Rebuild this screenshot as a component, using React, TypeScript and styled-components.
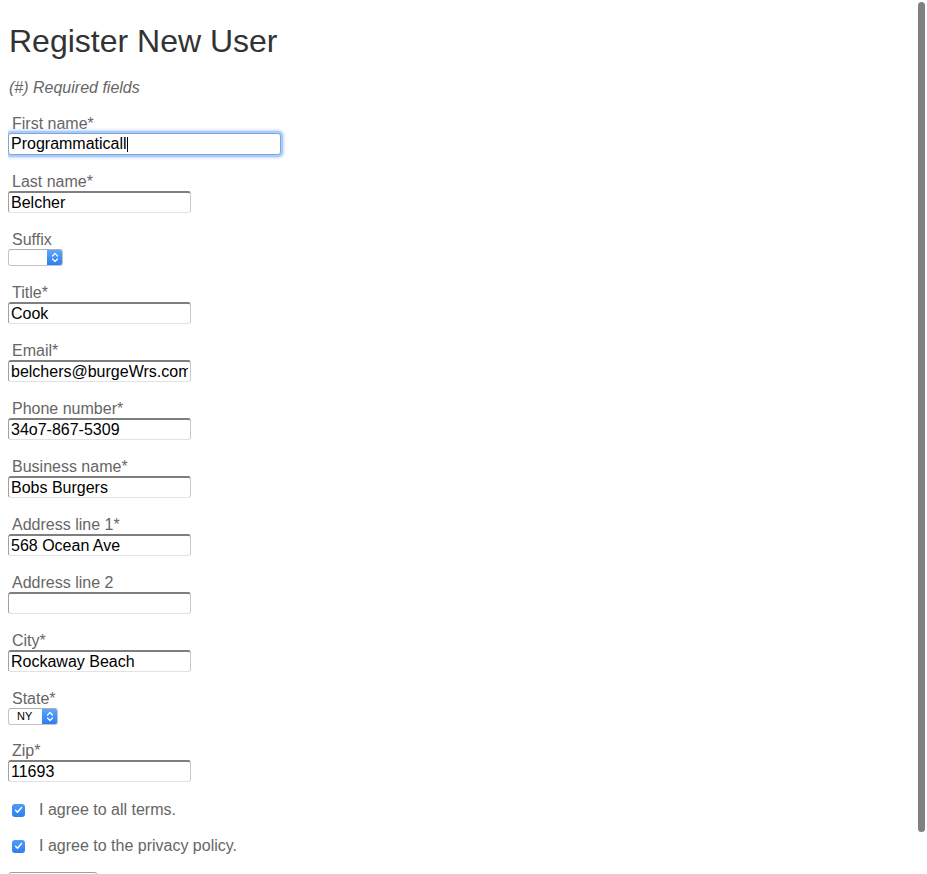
import React from 'react';
import styled, { createGlobalStyle } from 'styled-components';

const GlobalStyle = createGlobalStyle`
  html {
    scrollbar-width: none;
  }
  html::-webkit-scrollbar {
    display: none;
  }
  body {
    margin: 8px;
    background: #fff;
    font-family: 'Liberation Sans', Arial, Helvetica, sans-serif;
  }
`;

const FIELDS_A = [
  { label: 'Last name*', value: 'Belcher' },
];

const FIELDS_B = [
  { label: 'Title*', value: 'Cook' },
  { label: 'Email*', value: 'belchers@burgeWrs.com' },
  { label: 'Phone number*', value: '34o7-867-5309' },
  { label: 'Business name*', value: 'Bobs Burgers' },
  { label: 'Address line 1*', value: '568 Ocean Ave' },
  { label: 'Address line 2', value: '' },
  { label: 'City*', value: 'Rockaway Beach' },
];

export default function App() {
  return (
    <>
      <GlobalStyle />
      <Form onSubmit={(e) => e.preventDefault()}>
        <Title>Register New User</Title>
        <Note>(#) Required fields</Note>

        <Field>
          <Label>First name*</Label>
          <FocusWrap>
            <TextInput $focused $wide defaultValue="Programmaticall" />
            <Caret />
          </FocusWrap>
        </Field>

        {FIELDS_A.map((f) => (
          <Field key={f.label}>
            <Label>{f.label}</Label>
            <TextInput defaultValue={f.value} />
          </Field>
        ))}

        <Field>
          <Label>Suffix</Label>
          <Select width={55} value="" />
        </Field>

        {FIELDS_B.map((f) => (
          <Field key={f.label}>
            <Label>{f.label}</Label>
            <TextInput defaultValue={f.value} />
          </Field>
        ))}

        <Field>
          <Label>State*</Label>
          <Select width={50} value="NY" />
        </Field>

        <Field $tight>
          <Label>Zip*</Label>
          <TextInput defaultValue="11693" />
        </Field>

        <CheckRow>
          <CheckBox />
          <CheckText>I agree to all terms.</CheckText>
        </CheckRow>
        <CheckRow>
          <CheckBox />
          <CheckText>I agree to the privacy policy.</CheckText>
        </CheckRow>

        <SubmitButton type="submit">Register</SubmitButton>
      </Form>
      <ScrollThumb />
    </>
  );
}

function Select({ width, value }: { width: number; value: string }) {
  return (
    <SelectBox style={{ width }}>
      <SelectValue>{value}</SelectValue>
      <SelectCap>
        <svg width="8" height="11" viewBox="0 0 8 11" fill="none">
          <path d="M1.5 4L4 1.5L6.5 4" stroke="#fff" strokeWidth="1.2" strokeLinecap="round" strokeLinejoin="round" />
          <path d="M1.5 7L4 9.5L6.5 7" stroke="#fff" strokeWidth="1.2" strokeLinecap="round" strokeLinejoin="round" />
        </svg>
      </SelectCap>
    </SelectBox>
  );
}

function CheckBox() {
  return (
    <Check>
      <svg width="9" height="8" viewBox="0 0 9 8" fill="none">
        <path d="M1.5 4.2L3.5 6.2L7.5 1.5" stroke="#fff" strokeWidth="1.5" strokeLinecap="round" strokeLinejoin="round" />
      </svg>
    </Check>
  );
}

const Form = styled.form`
  display: flex;
  flex-direction: column;
  align-items: flex-start;
`;

const Title = styled.h1`
  margin: 16px 0 0 1px;
  font-size: 32px;
  line-height: 35px;
  font-weight: normal;
  color: #333;
`;

const Note = styled.p`
  margin: 19px 0 0 1px;
  font-size: 16px;
  line-height: 20px;
  font-style: italic;
  color: #666;
`;

const Field = styled.div<{ $tight?: boolean }>`
  display: flex;
  flex-direction: column;
  align-items: flex-start;
  margin-top: ${(p) => (p.$tight ? '17px' : '18px')};
  &:first-of-type {
    margin-top: 17px;
  }
`;

const Label = styled.label`
  padding-left: 4px;
  font-size: 16px;
  line-height: 18px;
  color: #666;
`;

const FocusWrap = styled.div`
  position: relative;
`;

const TextInput = styled.input<{ $focused?: boolean; $wide?: boolean }>`
  box-sizing: border-box;
  width: ${(p) => (p.$wide ? '273px' : '183px')};
  height: 22px;
  margin: 0;
  padding: 0 2px;
  font-family: 'Liberation Sans', Arial, sans-serif;
  font-size: 16px;
  color: #000;
  background: #fff;
  border: 1px solid #c8c8c8;
  border-top: 2px solid #7f7f7f;
  border-left-color: #a0a0a0;
  border-bottom-color: #e2e2e2;
  border-radius: 3px;
  outline: none;
  ${(p) =>
    p.$focused &&
    `
    border: 1px solid #7aa7e0;
    box-shadow: 0 0 0 2px #a9cbf5, 0 0 3px 3px rgba(120, 170, 240, 0.45);
  `}
`;

const Caret = styled.span`
  position: absolute;
  left: 119px;
  top: 4px;
  width: 1px;
  height: 15px;
  background: #000;
`;

const SelectBox = styled.div`
  box-sizing: border-box;
  display: flex;
  height: 17px;
  border: 1px solid #c4c4c4;
  border-top-color: #b0b0b0;
  border-radius: 3px;
  background: #fff;
  overflow: hidden;
`;

const SelectValue = styled.span`
  flex: 1;
  padding-left: 8px;
  font-size: 11px;
  line-height: 15px;
  color: #000;
`;

const SelectCap = styled.span`
  width: 15px;
  display: flex;
  align-items: center;
  justify-content: center;
  background: linear-gradient(#5ea6fb, #2c7ef3);
`;

const CheckRow = styled.label`
  display: flex;
  align-items: center;
  height: 20px;
  padding-left: 4px;
  margin-top: 18px;
  & + & {
    margin-top: 16px;
  }
`;

const Check = styled.span`
  width: 13px;
  height: 13px;
  border-radius: 3px;
  background: linear-gradient(#4d9cf9, #2b7ff0);
  display: flex;
  align-items: center;
  justify-content: center;
`;

const CheckText = styled.span`
  margin-left: 14px;
  font-size: 16px;
  color: #666;
`;

const SubmitButton = styled.button`
  margin-top: 16px;
  width: 90px;
  height: 24px;
  font-family: 'Liberation Sans', Arial, sans-serif;
  font-size: 13px;
  background: linear-gradient(#fff, #f0f0f0);
  border: 1px solid #b5b5b5;
  border-top-color: #a0a0a0;
  border-radius: 4px;
`;

const ScrollThumb = styled.div`
  position: fixed;
  top: 2px;
  right: 2px;
  width: 7px;
  height: 830px;
  border-radius: 4px;
  background: #808080;
`;
